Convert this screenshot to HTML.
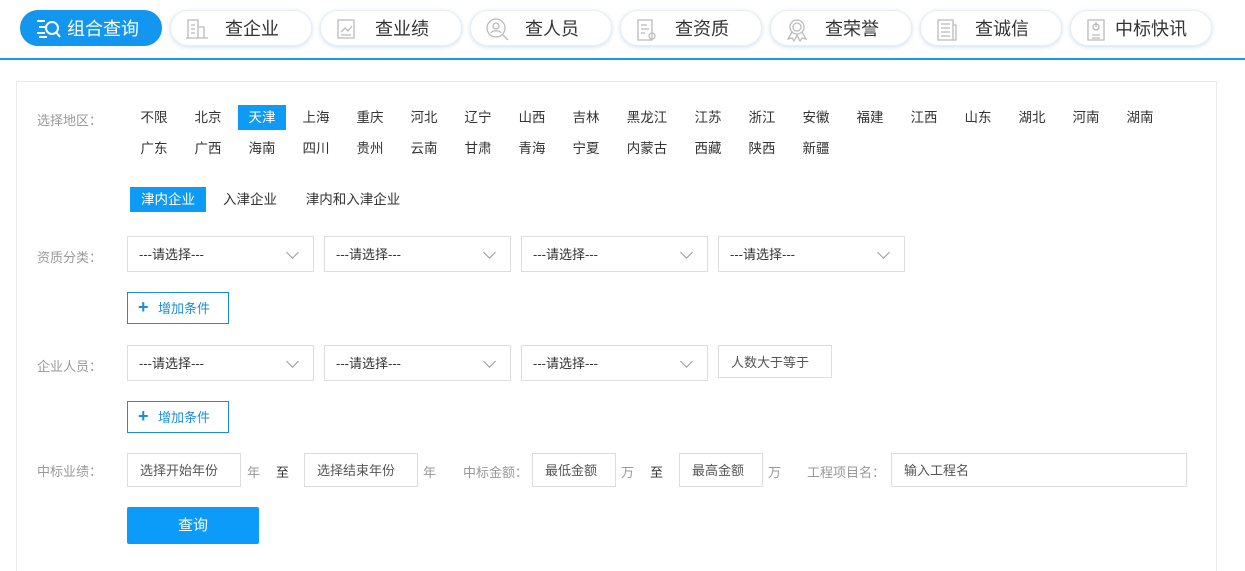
<!DOCTYPE html>
<html style="width:1245px;height:571px;overflow:hidden"><head><meta charset="utf-8"><style>
*{margin:0;padding:0;box-sizing:border-box}
body{width:1245px;height:571px;overflow:hidden;background:#fff;font-family:"Liberation Sans","Noto Sans CJK SC",sans-serif;position:relative;color:#333}
.a{position:absolute}
.tab{position:absolute;top:10px;width:142px;height:36px;border-radius:18px;background:#fff;box-shadow:0 1px 4px rgba(120,160,210,.35);border:1px solid #e8eef5;font-size:18px;color:#333;line-height:37px}
.tab svg{position:absolute;left:14px;top:7px}
.tab span{position:absolute;left:54px}
.tab.on{background:#1296ef;color:#fff;border-color:#1296ef;box-shadow:none}
.line{position:absolute;left:0;top:58px;width:1245px;height:2px;background:#1a9be6}
.panel{position:absolute;left:16px;top:81px;width:1201px;height:490px;border:1px solid #eaeaea;border-bottom:none}
.lab{position:absolute;font-size:13px;color:#999;left:37px}
.r{position:absolute;font-size:13.5px;color:#333;width:48px;height:25px;line-height:26px;text-align:center}
.r.on{background:#0d9bf5;color:#fff}
.sel{position:absolute;width:187px;height:36px;border:1px solid #ddd;font-size:13px;color:#333;line-height:36px;padding-left:11px}
.sel:after{content:"";position:absolute;right:16px;top:11px;width:8px;height:8px;border-right:1px solid #999;border-bottom:1px solid #999;transform:rotate(45deg)}
.add{position:absolute;left:127px;width:102px;height:32px;border:1px solid #1a8fd8;color:#1a8fd8;font-size:13px;line-height:31px;padding-left:30px}
.add b{position:absolute;left:10px;top:-1px;font-size:18px;font-weight:bold}
.inp{position:absolute;top:453px;height:34px;border:1px solid #ddd;font-size:13px;color:#555;line-height:33px;padding-left:12px}
.t{position:absolute;top:462px;font-size:13px;color:#999}
</style></head><body>
<div class="tab on" style="left:20px"><svg width="26" height="22" viewBox="0 0 26 22" fill="none" stroke="#fff" stroke-width="2"><path d="M2 3h8M4 9h6M2 15h8M4 19h8"/><circle cx="17" cy="10" r="6"/><path d="M21 14l4 5"/></svg><span style="left:46px">组合查询</span></div>
<div class="tab" style="left:170px"><svg width="24" height="22" viewBox="0 0 24 22" fill="none" stroke="#bbb" stroke-width="1.3"><path d="M3 2h10v18H3zM13 9h6v11h-6M6 7h4M6 11h4M6 15h4M1 20h22"/></svg><span>查企业</span></div>
<div class="tab" style="left:320px"><svg width="24" height="22" viewBox="0 0 24 22" fill="none" stroke="#bbb" stroke-width="1.3"><path d="M3 2h16v18H3zM6 14l4-4 3 3 4-5M6 17h10"/></svg><span>查业绩</span></div>
<div class="tab" style="left:470px"><svg width="26" height="24" viewBox="0 0 26 24" fill="none" stroke="#bbb" stroke-width="1.3"><circle cx="11" cy="10" r="9"/><circle cx="11" cy="8" r="3"/><path d="M6 15c2-3 8-3 10 0M18 17l5 5"/></svg><span>查人员</span></div>
<div class="tab" style="left:620px"><svg width="24" height="24" viewBox="0 0 24 24" fill="none" stroke="#bbb" stroke-width="1.3"><path d="M3 2h14v20H3zM6 7h6M6 11h8M6 15h4"/><circle cx="17" cy="18" r="3"/></svg><span>查资质</span></div>
<div class="tab" style="left:770px"><svg width="24" height="24" viewBox="0 0 24 24" fill="none" stroke="#bbb" stroke-width="1.3"><circle cx="12" cy="9" r="7"/><circle cx="12" cy="9" r="4"/><path d="M7 14l-4 7 4-1 2 3 3-6M17 14l4 7-4-1-2 3-3-6"/></svg><span>查荣誉</span></div>
<div class="tab" style="left:920px"><svg width="24" height="24" viewBox="0 0 24 24" fill="none" stroke="#bbb" stroke-width="1.3"><path d="M3 2h15v20H3zM18 7h3v15h-3M6 6h9M6 10h9M6 14h9M6 18h9"/></svg><span>查诚信</span></div>
<div class="tab" style="left:1070px"><svg width="24" height="24" viewBox="0 0 24 24" fill="none" stroke="#bbb" stroke-width="1.3"><path d="M3 2h16v20H3zM7 17h8M7 20h8"/><circle cx="11" cy="9" r="3"/><path d="M11 4v5"/></svg><span style="left:44px">中标快讯</span></div>
<div class="line"></div>
<div class="panel"></div>
<div class="lab" style="top:110px">选择地区：</div>
<div class="r" style="left:130px;top:105px">不限</div><div class="r" style="left:184px;top:105px">北京</div><div class="r on" style="left:238px;top:105px">天津</div><div class="r" style="left:292px;top:105px">上海</div><div class="r" style="left:346px;top:105px">重庆</div><div class="r" style="left:400px;top:105px">河北</div><div class="r" style="left:454px;top:105px">辽宁</div><div class="r" style="left:508px;top:105px">山西</div><div class="r" style="left:562px;top:105px">吉林</div><div class="r" style="left:616px;top:105px;width:62px">黑龙江</div><div class="r" style="left:684px;top:105px">江苏</div><div class="r" style="left:738px;top:105px">浙江</div><div class="r" style="left:792px;top:105px">安徽</div><div class="r" style="left:846px;top:105px">福建</div><div class="r" style="left:900px;top:105px">江西</div><div class="r" style="left:954px;top:105px">山东</div><div class="r" style="left:1008px;top:105px">湖北</div><div class="r" style="left:1062px;top:105px">河南</div><div class="r" style="left:1116px;top:105px">湖南</div>
<div class="r" style="left:130px;top:136px">广东</div><div class="r" style="left:184px;top:136px">广西</div><div class="r" style="left:238px;top:136px">海南</div><div class="r" style="left:292px;top:136px">四川</div><div class="r" style="left:346px;top:136px">贵州</div><div class="r" style="left:400px;top:136px">云南</div><div class="r" style="left:454px;top:136px">甘肃</div><div class="r" style="left:508px;top:136px">青海</div><div class="r" style="left:562px;top:136px">宁夏</div><div class="r" style="left:616px;top:136px;width:62px">内蒙古</div><div class="r" style="left:684px;top:136px">西藏</div><div class="r" style="left:738px;top:136px">陕西</div><div class="r" style="left:792px;top:136px">新疆</div>
<div class="r on" style="left:130px;top:187px;width:76px">津内企业</div>
<div class="r" style="left:214px;top:187px;width:72px">入津企业</div>
<div class="r" style="left:298px;top:187px;width:110px">津内和入津企业</div>
<div class="lab" style="top:247px">资质分类：</div>
<div class="sel" style="left:127px;top:236px">---请选择---</div><div class="sel" style="left:324px;top:236px">---请选择---</div><div class="sel" style="left:521px;top:236px">---请选择---</div><div class="sel" style="left:718px;top:236px">---请选择---</div>
<div class="add" style="top:292px"><b>+</b>增加条件</div>
<div class="lab" style="top:356px">企业人员：</div>
<div class="sel" style="left:127px;top:345px">---请选择---</div><div class="sel" style="left:324px;top:345px">---请选择---</div><div class="sel" style="left:521px;top:345px">---请选择---</div>
<div class="inp" style="left:718px;top:345px;width:114px;height:33px">人数大于等于</div>
<div class="add" style="top:401px"><b>+</b>增加条件</div>
<div class="lab" style="top:461px">中标业绩：</div>
<div class="inp" style="left:127px;width:114px">选择开始年份</div>
<div class="t" style="left:247px">年</div><div class="t" style="left:276px;color:#333">至</div>
<div class="inp" style="left:304px;width:114px">选择结束年份</div>
<div class="t" style="left:423px">年</div><div class="t" style="left:463px">中标金额：</div>
<div class="inp" style="left:532px;width:84px">最低金额</div>
<div class="t" style="left:621px">万</div><div class="t" style="left:650px;color:#333">至</div>
<div class="inp" style="left:679px;width:84px">最高金额</div>
<div class="t" style="left:768px">万</div><div class="t" style="left:807px">工程项目名：</div>
<div class="inp" style="left:891px;width:296px">输入工程名</div>
<div class="a" style="left:127px;top:507px;width:132px;height:37px;background:#0d9bfa;border-radius:2px;color:#fff;font-size:15px;line-height:38px;text-align:center">查询</div>
</body></html>
